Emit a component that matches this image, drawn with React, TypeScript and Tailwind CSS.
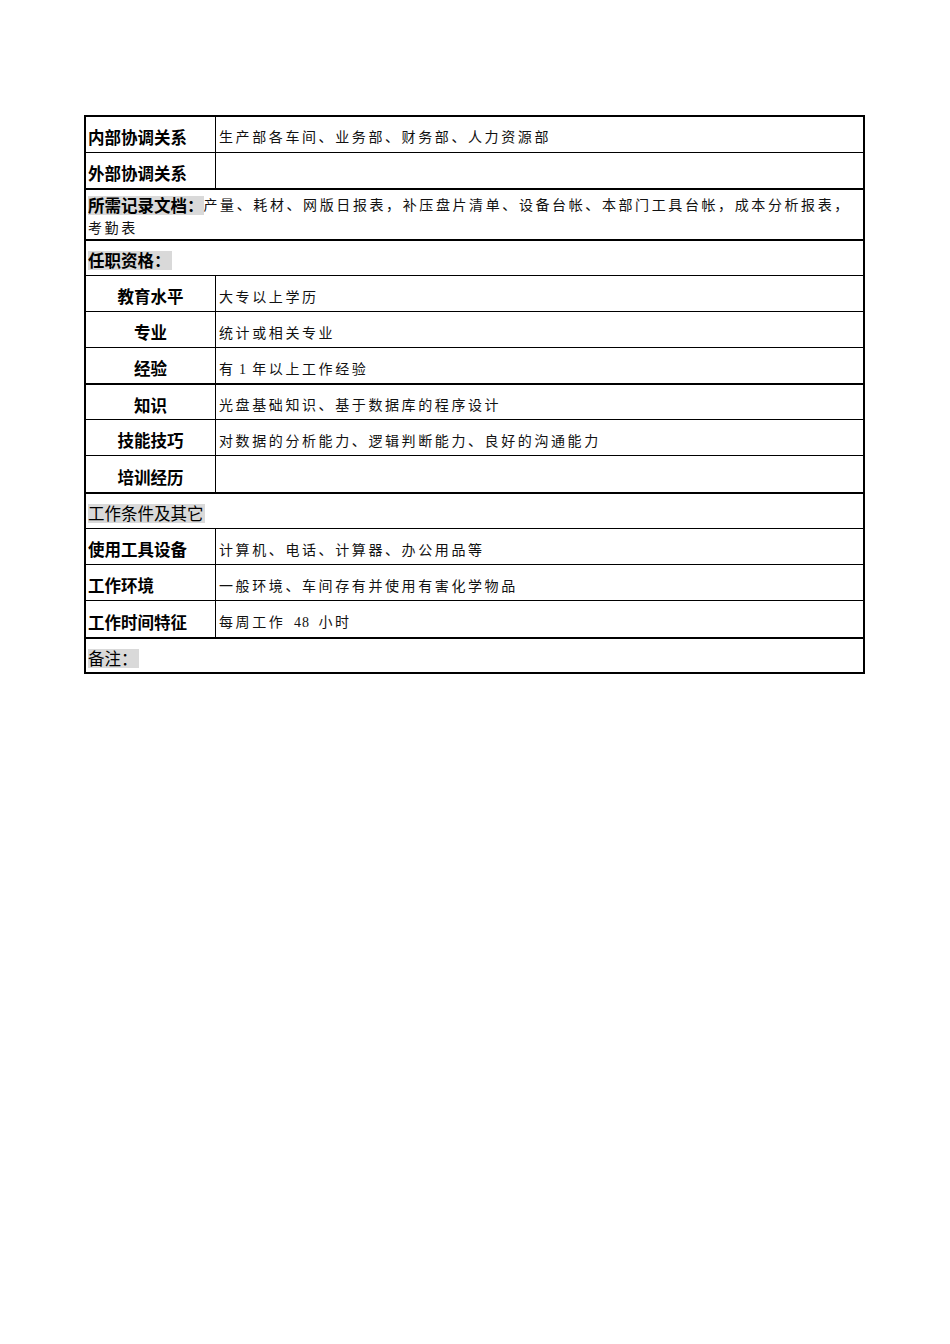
import React from "react";

const LABEL = "font-['Noto_Sans_CJK_SC','Noto_Sans',sans-serif] text-[16.5px] text-black";
const VALUE =
  "font-['Liberation_Serif','Noto_Sans_CJK_SC',serif] text-[14px] tracking-[2.6px] text-[#111]";

type RowProps = {
  label: string;
  value?: React.ReactNode;
  h: string;
  top: string;
  center?: boolean;
  pt?: string;
  vpt?: string;
};

function Sp({ wide }: { wide?: boolean }) {
  return <span className={wide ? "tracking-[5px]" : "tracking-normal"}> </span>;
}

function Row({ label, value, h, top, center, pt = "pt-[5px]", vpt = "pt-[8px]" }: RowProps) {
  return (
    <div className={`flex ${h} ${top} border-black`}>
      <div
        className={`w-[130px] shrink-0 border-r border-black flex items-center ${pt} ${
          center ? "justify-center" : "pl-[2px]"
        }`}
      >
        <span className={`${LABEL} font-bold leading-[20px]`}>{label}</span>
      </div>
      <div className={`flex-1 flex items-center pl-[3px] ${vpt}`}>
        {value ? <span className={`${VALUE} leading-[20px] whitespace-nowrap`}>{value}</span> : null}
      </div>
    </div>
  );
}

function Section({
  label,
  h,
  top,
  bold = true,
}: {
  label: string;
  h: string;
  top: string;
  bold?: boolean;
}) {
  return (
    <div className={`flex items-center ${h} ${top} border-black pl-[2px] pt-[5px]`}>
      <span
        className={`${LABEL} ${bold ? "font-bold" : "font-normal"} bg-[#d9d9d9] inline-block leading-[19px] pr-[1px]`}
      >
        {label}
      </span>
    </div>
  );
}

export default function App() {
  return (
    <div className="min-h-[1344px] w-[950px] bg-white pt-[115px] pl-[84px]">
      <div className="w-[781px] border-l-2 border-r-2 border-b-2 border-black">
        <Row
          label="内部协调关系"
          value="生产部各车间、业务部、财务部、人力资源部"
          h="h-[37px]"
          top="border-t-2"
          pt="pt-[4px]"
          vpt="pt-[7px]"
        />
        <Row label="外部协调关系" h="h-[36px]" top="border-t" />
        <div className="h-[51px] border-t-2 border-black pl-[2px] pt-[3px] leading-[23px]">
          <div className="whitespace-nowrap">
            <span className={`${LABEL} font-bold bg-[#d9d9d9] inline-block leading-[19px] align-middle`}>
              所需记录文档：
            </span>
            <span className={`${VALUE} align-middle`}>
              产量、耗材、网版日报表，补压盘片清单、设备台帐、本部门工具台帐，成本分析报表，
            </span>
          </div>
          <div className={`${VALUE} leading-[23px]`}>考勤表</div>
        </div>
        <Section label="任职资格：" h="h-[36px]" top="border-t-2" />
        <Row label="教育水平" value="大专以上学历" h="h-[36px]" top="border-t" center />
        <Row label="专业" value="统计或相关专业" h="h-[36px]" top="border-t" center />
        <Row
          label="经验"
          value={
            <>
              有<Sp />1<Sp />年以上工作经验
            </>
          }
          h="h-[36px]"
          top="border-t"
          center
        />
        <Row label="知识" value="光盘基础知识、基于数据库的程序设计" h="h-[36px]" top="border-t-2" center />
        <Row label="技能技巧" value="对数据的分析能力、逻辑判断能力、良好的沟通能力" h="h-[36px]" top="border-t" center />
        <Row label="培训经历" h="h-[37px]" top="border-t" center />
        <Section label="工作条件及其它" h="h-[36px]" top="border-t-2" bold={false} />
        <Row label="使用工具设备" value="计算机、电话、计算器、办公用品等" h="h-[36px]" top="border-t" />
        <Row label="工作环境" value="一般环境、车间存有并使用有害化学物品" h="h-[36px]" top="border-t" />
        <Row
          label="工作时间特征"
          value={
            <>
              每周工作<Sp wide />
              <span className="tracking-[1px]">48</span>
              <Sp wide />
              小时
            </>
          }
          h="h-[37px]"
          top="border-t"
        />
        <Section label="备注：" h="h-[35px]" top="border-t-2" bold={false} />
      </div>
    </div>
  );
}
